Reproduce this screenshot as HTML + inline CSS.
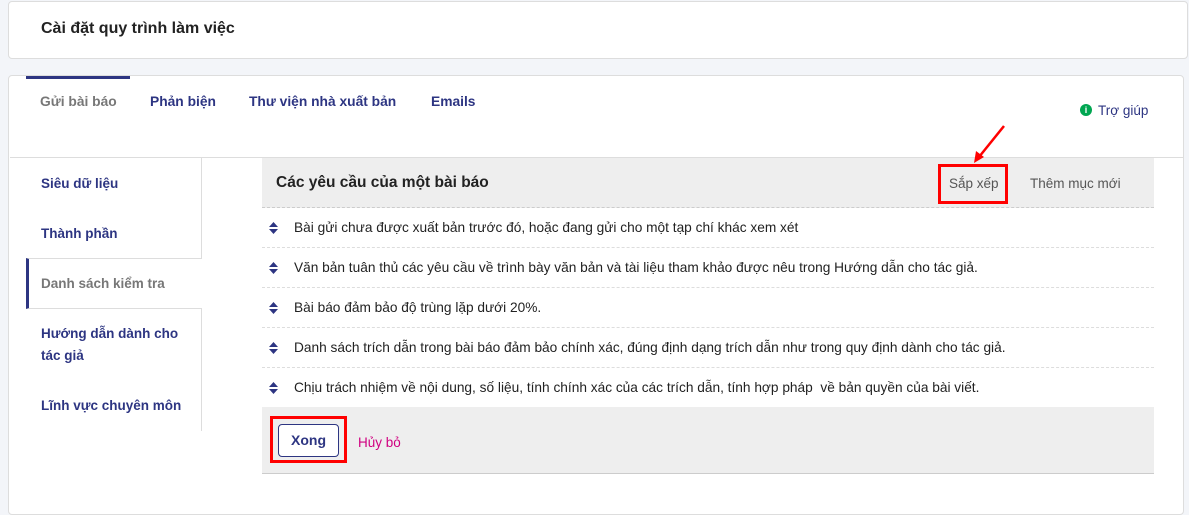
<!DOCTYPE html>
<html><head><meta charset="utf-8"><style>
*{box-sizing:border-box;margin:0;padding:0}
body{width:1189px;height:503px;background:#f3f5f9;font-family:"Liberation Sans",sans-serif;position:relative;overflow:hidden;color:#222}
.abs{position:absolute}
.card{background:#fff;border:1px solid #ddd;border-radius:4px}
.tab{position:absolute;top:94px;font-size:13.8px;font-weight:bold;color:#2d3582}
.side{position:absolute;left:41px;font-size:13.5px;font-weight:bold;color:#2d3582;line-height:22px}
.row{position:absolute;left:262px;width:892px;height:40px;border-bottom:1px dashed #ddd;font-size:13.7px;color:#222;line-height:40px;padding-left:32px;background:#fff}
.row svg{position:absolute;left:7px;top:14px}
</style></head><body>
<div class="abs card" style="left:8px;top:1px;width:1180px;height:58px"></div>
<div class="abs" style="left:41px;top:20px;font-size:16px;font-weight:bold;color:#222">Cài đặt quy trình làm việc</div>

<div class="abs card" style="left:8px;top:75px;width:1176px;height:440px"></div>
<div class="abs" style="left:26px;top:76px;width:104px;height:3px;background:#2d3582"></div>
<div class="tab" style="left:40px;color:#777">Gửi bài báo</div>
<div class="tab" style="left:150px">Phản biện</div>
<div class="tab" style="left:249px">Thư viện nhà xuất bản</div>
<div class="tab" style="left:431px">Emails</div>
<div class="abs" style="left:1080px;top:104px;width:12px;height:12px;border-radius:50%;background:#00a651;color:#fff;font-size:9px;font-weight:bold;text-align:center;line-height:12px">i</div>
<div class="abs" style="left:1098px;top:103px;font-size:13.5px;color:#2d3582">Trợ giúp</div>

<div class="abs" style="left:10px;top:157px;width:1173px;height:1px;background:#ddd"></div>
<div class="abs" style="left:201px;top:158px;width:1px;height:273px;background:#ddd"></div>
<div class="abs" style="left:26px;top:258px;width:176px;height:51px;background:#fff;border-top:1px solid #ddd;border-bottom:1px solid #ddd;border-left:3px solid #2d3582"></div>
<div class="side" style="top:173px">Siêu dữ liệu</div>
<div class="side" style="top:223px">Thành phần</div>
<div class="side" style="top:273px;color:#777">Danh sách kiểm tra</div>
<div class="side" style="top:323px">Hướng dẫn dành cho<br>tác giả</div>
<div class="side" style="top:395px">Lĩnh vực chuyên môn</div>

<div class="abs" style="left:262px;top:158px;width:892px;height:50px;background:#eee;border-bottom:1px dashed #ccc"></div>
<div class="abs" style="left:276px;top:174px;font-size:15.5px;font-weight:bold;color:#222">Các yêu cầu của một bài báo</div>
<div class="abs" style="left:949px;top:176px;font-size:13.5px;color:#555">Sắp xếp</div>
<div class="abs" style="left:1030px;top:176px;font-size:13.5px;color:#555">Thêm mục mới</div>

<div class="row" style="top:208px"><svg width="9" height="12" viewBox="0 0 9 12"><path d="M4.5 0L9 5H0z M4.5 12L0 7h9z" fill="#2d3582"/></svg>Bài gửi chưa được xuất bản trước đó, hoặc đang gửi cho một tạp chí khác xem xét</div>
<div class="row" style="top:248px"><svg width="9" height="12" viewBox="0 0 9 12"><path d="M4.5 0L9 5H0z M4.5 12L0 7h9z" fill="#2d3582"/></svg>Văn bản tuân thủ các yêu cầu về trình bày văn bản và tài liệu tham khảo được nêu trong Hướng dẫn cho tác giả.</div>
<div class="row" style="top:288px"><svg width="9" height="12" viewBox="0 0 9 12"><path d="M4.5 0L9 5H0z M4.5 12L0 7h9z" fill="#2d3582"/></svg>Bài báo đảm bảo độ trùng lặp dưới 20%.</div>
<div class="row" style="top:328px"><svg width="9" height="12" viewBox="0 0 9 12"><path d="M4.5 0L9 5H0z M4.5 12L0 7h9z" fill="#2d3582"/></svg>Danh sách trích dẫn trong bài báo đảm bảo chính xác, đúng định dạng trích dẫn như trong quy định dành cho tác giả.</div>
<div class="row" style="top:368px;border-bottom:none"><svg width="9" height="12" viewBox="0 0 9 12"><path d="M4.5 0L9 5H0z M4.5 12L0 7h9z" fill="#2d3582"/></svg>Chịu trách nhiệm về nội dung, số liệu, tính chính xác của các trích dẫn, tính hợp pháp&nbsp; về bản quyền của bài viết.</div>

<div class="abs" style="left:262px;top:407px;width:892px;height:67px;background:#eee;border-bottom:1px solid #ccc"></div>
<div class="abs" style="left:278px;top:424px;width:61px;height:33px;background:#fff;border:1px solid #2d3582;border-radius:4px;font-size:14px;font-weight:bold;color:#2d3582;text-align:center;line-height:31px">Xong</div>
<div class="abs" style="left:358px;top:435px;font-size:13.5px;color:#d00080">Hủy bỏ</div>

<div class="abs" style="left:938px;top:164px;width:70px;height:40px;border:3px solid #f00"></div>
<div class="abs" style="left:270px;top:416px;width:77px;height:47px;border:3px solid #f00"></div>
<svg class="abs" style="left:970px;top:124px" width="40" height="40" viewBox="0 0 40 40"><path d="M34 2L9 33" stroke="#f00" stroke-width="2.5"/><path d="M4 39L6 27L14 33z" fill="#f00"/></svg>
</body></html>
